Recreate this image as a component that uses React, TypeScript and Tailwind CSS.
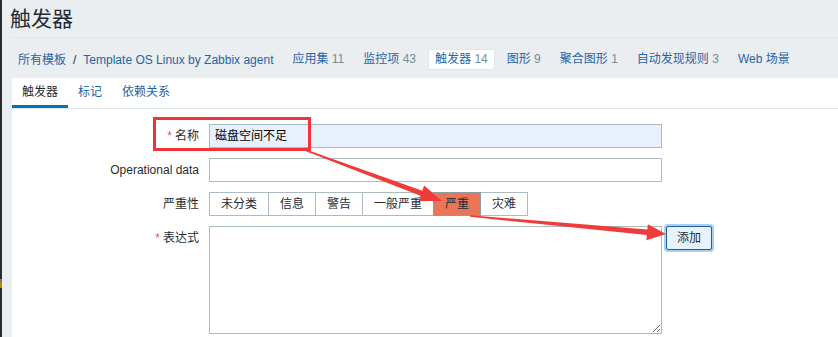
import React from 'react';

const font = "font-['Liberation_Sans','Noto_Sans_CJK_SC',sans-serif]";

interface NavItem {
  label: string;
  count?: number;
  active?: boolean;
}

const navItems: NavItem[] = [
  { label: '应用集', count: 11 },
  { label: '监控项', count: 43 },
  { label: '触发器', count: 14, active: true },
  { label: '图形', count: 9 },
  { label: '聚合图形', count: 1 },
  { label: '自动发现规则', count: 3 },
  { label: 'Web 场景' },
];

const severities = ['未分类', '信息', '警告', '一般严重', '严重', '灾难'];

const Label: React.FC<{ text: string; required?: boolean }> = ({ text, required }) => (
  <div className="text-right leading-[24px] text-[12px] text-[#1f2c33]">
    {required && <span className="text-[#e45959] mr-[3px]">*</span>}
    {text}
  </div>
);

export default function App() {
  return (
    <div className={`relative w-[838px] h-[337px] overflow-hidden flex ${font}`}>
      <div className="relative w-[2px] bg-[#2b2b2b] shrink-0">
        <div className="absolute left-0 top-[279px] w-[2px] h-[3px] bg-[#777]" />
        <div className="absolute left-0 top-[282px] w-[2px] h-[6px] bg-[#b8860b]" />
      </div>
      <div className="flex-1 bg-[#ebeef0] pl-[10px] flex flex-col">
        {/* header */}
        <div className="h-[38px] border-b border-[#dfe4e7]">
          <h1 className="-ml-[2px] pt-[5px] leading-[24px] text-[21px] font-normal text-[#1f2c33] font-['Noto_Sans_CJK_SC',sans-serif]">
            触发器
          </h1>
        </div>

        {/* breadcrumbs + nav */}
        <div className="flex items-center pt-[11px] pb-[8px] pl-[6px] text-[12px]">
          <div className="flex items-center h-[21px] text-[#1f65a6]">
            <span>所有模板</span>
            <span className="mx-[7px] text-[#1f2c33]">/</span>
            <span>Template OS Linux by Zabbix agent</span>
          </div>
          <div className="flex items-center ml-[12px] gap-[5px]">
            {navItems.map((item) => (
              <div
                key={item.label}
                className={
                  item.active
                    ? 'h-[21px] leading-[19px] px-[6px] bg-white rounded-[2px] border border-[#e1e6e9]'
                    : 'h-[21px] leading-[21px] px-[7px]'
                }
              >
                <span className="text-[#1f65a6]">{item.label}</span>
                {item.count !== undefined && <span className="text-[#768d99]"> {item.count}</span>}
              </div>
            ))}
          </div>
        </div>

        {/* content */}
        <div className="flex-1 bg-white">
          <div className="flex border-b border-[#dfe4e7] text-[12px]">
            <div className="h-[30px] px-[10px] pt-px leading-[26px] border-b-[3px] border-[#0275b8] text-[#1f2c33]">触发器</div>
            <div className="h-[30px] px-[10px] pt-px leading-[26px] border-b-[3px] border-transparent text-[#1f65a6]">标记</div>
            <div className="h-[30px] px-[10px] pt-px leading-[26px] border-b-[3px] border-transparent text-[#1f65a6]">依赖关系</div>
          </div>

          <div className="grid grid-cols-[187px_auto] gap-x-[10px] gap-y-[10px] pt-[15px]">
            <Label text="名称" required />
            <div className="w-[453px] h-[24px] border border-[#acbbc2] bg-[#e8f0fe] pl-[5px] leading-[22px] text-[12px] text-black">
              磁盘空间不足
            </div>

            <Label text="Operational data" />
            <div className="w-[453px] h-[24px] border border-[#acbbc2] bg-white" />

            <Label text="严重性" />
            <div className="flex">
              {severities.map((s, i) => (
                <div
                  key={s}
                  className={
                    (i > 0 ? '-ml-px ' : '') +
                    (s === '严重'
                      ? 'relative h-[24px] px-[11px] leading-[22px] text-[12px] border border-[#8e9ba3] bg-[#e97659] text-[#1f2c33]'
                      : 'h-[24px] px-[11px] leading-[22px] text-[12px] border border-[#acbbc2] bg-white text-[#1f2c33]')
                  }
                >
                  {s}
                </div>
              ))}
            </div>

            <Label text="表达式" required />
            <div className="flex items-start">
              <textarea className="w-[453px] h-[108px] border border-[#acbbc2] bg-white outline-none" />
              <button className="ml-[4px] w-[46px] h-[24px] border border-[#1f5f96] bg-[#e6f2fc] rounded-[2px] text-[12px] text-[#1f2c33] shadow-[0_0_0_2px_#a9d0f0]">
                添加
              </button>
            </div>
          </div>
        </div>
      </div>

      {/* annotations */}
      <svg className="absolute inset-0 pointer-events-none" width="838" height="337" viewBox="0 0 838 337">
        <rect x="154.5" y="118.5" width="155" height="31" fill="none" stroke="#f0353a" strokeWidth="3" />
        <polygon
          fill="#f03b3b"
          points="305.3,149.3 422.3,190.8 424.2,185.6 442,201 418.6,201 420.5,195.8 304.7,150.7"
        />
        <polygon
          fill="#f03b3b"
          points="470.1,215.3 647.3,229.5 647.9,224.2 666,234 646.3,240.2 646.9,234.9 469.9,216.8"
        />
      </svg>
    </div>
  );
}
